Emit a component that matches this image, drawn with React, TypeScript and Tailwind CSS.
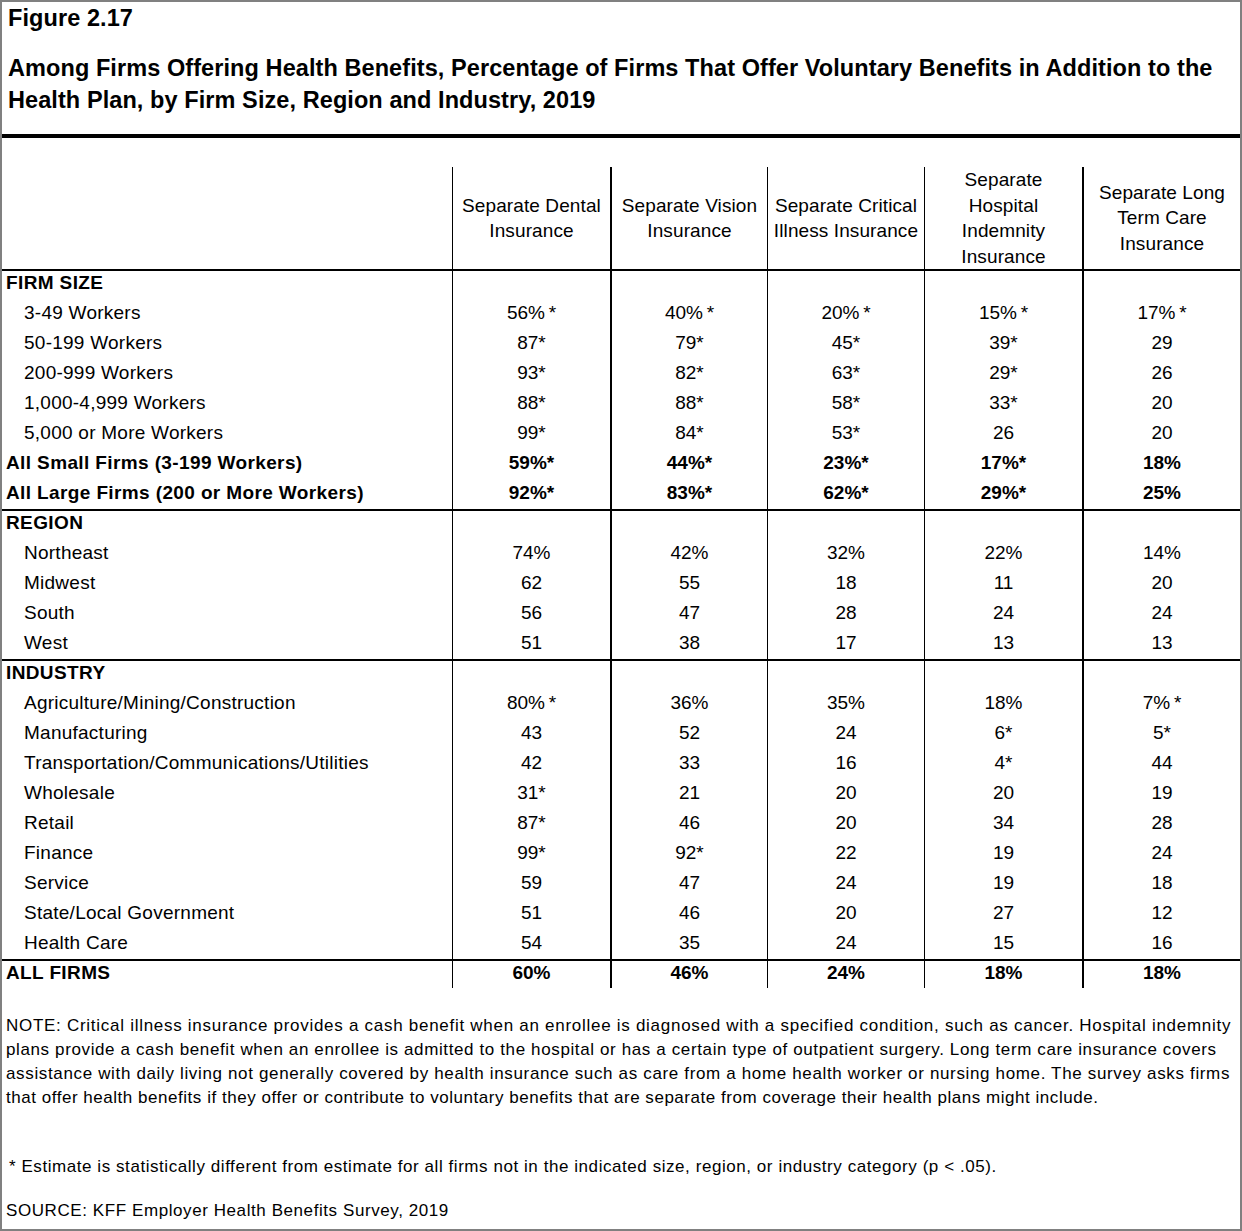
import React from 'react';

type RowData = {
  label: string;
  values?: string[];
  kind: 'section' | 'item' | 'total';
};

const colBorders = [
  'border-l border-black',
  'border-l-2 border-black',
  'border-l border-black',
  'border-l border-black',
  'border-l-2 border-black',
];

const gridCols = 'grid grid-cols-[450px_158px_157px_157px_158px_158px]';

const headers = [
  ['Separate Dental', 'Insurance'],
  ['Separate Vision', 'Insurance'],
  ['Separate Critical', 'Illness Insurance'],
  ['Separate', 'Hospital', 'Indemnity', 'Insurance'],
  ['Separate Long', 'Term Care', 'Insurance'],
];

const sections: RowData[][] = [
  [
    { label: 'FIRM SIZE', kind: 'section' },
    { label: '3-49 Workers', kind: 'item', values: ['56%\u2009*', '40%\u2009*', '20%\u2009*', '15%\u2009*', '17%\u2009*'] },
    { label: '50-199 Workers', kind: 'item', values: ['87*', '79*', '45*', '39*', '29'] },
    { label: '200-999 Workers', kind: 'item', values: ['93*', '82*', '63*', '29*', '26'] },
    { label: '1,000-4,999 Workers', kind: 'item', values: ['88*', '88*', '58*', '33*', '20'] },
    { label: '5,000 or More Workers', kind: 'item', values: ['99*', '84*', '53*', '26', '20'] },
    { label: 'All Small Firms (3-199 Workers)', kind: 'total', values: ['59%*', '44%*', '23%*', '17%*', '18%'] },
    { label: 'All Large Firms (200 or More Workers)', kind: 'total', values: ['92%*', '83%*', '62%*', '29%*', '25%'] },
  ],
  [
    { label: 'REGION', kind: 'section' },
    { label: 'Northeast', kind: 'item', values: ['74%', '42%', '32%', '22%', '14%'] },
    { label: 'Midwest', kind: 'item', values: ['62', '55', '18', '11', '20'] },
    { label: 'South', kind: 'item', values: ['56', '47', '28', '24', '24'] },
    { label: 'West', kind: 'item', values: ['51', '38', '17', '13', '13'] },
  ],
  [
    { label: 'INDUSTRY', kind: 'section' },
    { label: 'Agriculture/Mining/Construction', kind: 'item', values: ['80%\u2009*', '36%', '35%', '18%', '7%\u2009*'] },
    { label: 'Manufacturing', kind: 'item', values: ['43', '52', '24', '6*', '5*'] },
    { label: 'Transportation/Communications/Utilities', kind: 'item', values: ['42', '33', '16', '4*', '44'] },
    { label: 'Wholesale', kind: 'item', values: ['31*', '21', '20', '20', '19'] },
    { label: 'Retail', kind: 'item', values: ['87*', '46', '20', '34', '28'] },
    { label: 'Finance', kind: 'item', values: ['99*', '92*', '22', '19', '24'] },
    { label: 'Service', kind: 'item', values: ['59', '47', '24', '19', '18'] },
    { label: 'State/Local Government', kind: 'item', values: ['51', '46', '20', '27', '12'] },
    { label: 'Health Care', kind: 'item', values: ['54', '35', '24', '15', '16'] },
  ],
];

const Row = ({ row, rowClass }: { row: RowData; rowClass: string }) => {
  const bold = row.kind !== 'item';
  return (
    <div className={`${gridCols} ${rowClass}`}>
      <div
        className={`leading-[24px] ${bold ? 'pl-[4px] font-bold tracking-[0.38px]' : 'pl-[22px] tracking-[0.25px]'}`}
      >
        {row.label}
      </div>
      {colBorders.map((b, i) => (
        <div key={i} className={`${b} text-center leading-[24px] ${bold ? 'font-bold' : ''}`}>
          {row.values ? row.values[i] : ''}
        </div>
      ))}
    </div>
  );
};

export default function App() {
  return (
    <div className="h-[1231px] w-[1242px] border-2 border-[#808080] bg-white text-black font-['Liberation_Sans',Arial,sans-serif]">
      <div className="pl-[6px] pt-[2px] font-bold tracking-[0.08px]">
        <div className="text-[23.5px] leading-[28px]">Figure 2.17</div>
        <div className="mt-[20px] text-[23.5px] leading-[32px]">
          Among Firms Offering Health Benefits, Percentage of Firms That Offer Voluntary Benefits in Addition to the
          <br />
          Health Plan, by Firm Size, Region and Industry, 2019
        </div>
      </div>
      <div className="mt-[18px] h-[4px] bg-black" />

      <div className="mt-[29px] text-[19px]">
        <div className={`${gridCols} h-[104px] border-b-2 border-black`}>
          <div />
          {headers.map((lines, i) => (
            <div
              key={i}
              className={`${colBorders[i]} flex flex-col items-center justify-center text-center leading-[25.5px] tracking-[0.1px]`}
            >
              {lines.map((l, j) => (
                <span key={j}>{l}</span>
              ))}
            </div>
          ))}
        </div>

        {sections.map((sec, si) => (
          <div key={si}>
            {sec.map((row, ri) => (
              <Row
                key={ri}
                row={row}
                rowClass={ri === sec.length - 1 ? 'h-[30px] border-b-2 border-black' : 'h-[30px]'}
              />
            ))}
          </div>
        ))}
        <Row
          row={{ label: 'ALL FIRMS', kind: 'total', values: ['60%', '46%', '24%', '18%', '18%'] }}
          rowClass="h-[27px]"
        />
      </div>

      <div className="mt-[26px] whitespace-nowrap pl-[4px] text-[17px] leading-[24px]">
        <div className="tracking-[0.72px]">
          NOTE: Critical illness insurance provides a cash benefit when an enrollee is diagnosed with a specified condition, such as cancer. Hospital indemnity
        </div>
        <div className="tracking-[0.62px]">
          plans provide a cash benefit when an enrollee is admitted to the hospital or has a certain type of outpatient surgery. Long term care insurance covers
        </div>
        <div className="tracking-[0.65px]">
          assistance with daily living not generally covered by health insurance such as care from a home health worker or nursing home. The survey asks firms
        </div>
        <div className="tracking-[0.53px]">
          that offer health benefits if they offer or contribute to voluntary benefits that are separate from coverage their health plans might include.
        </div>
        <div className="mt-[45px] pl-[3px] tracking-[0.56px]">
          * Estimate is statistically different from estimate for all firms not in the indicated size, region, or industry category (p &lt; .05).
        </div>
        <div className="mt-[20px] tracking-[0.58px]">SOURCE: KFF Employer Health Benefits Survey, 2019</div>
      </div>
    </div>
  );
}
